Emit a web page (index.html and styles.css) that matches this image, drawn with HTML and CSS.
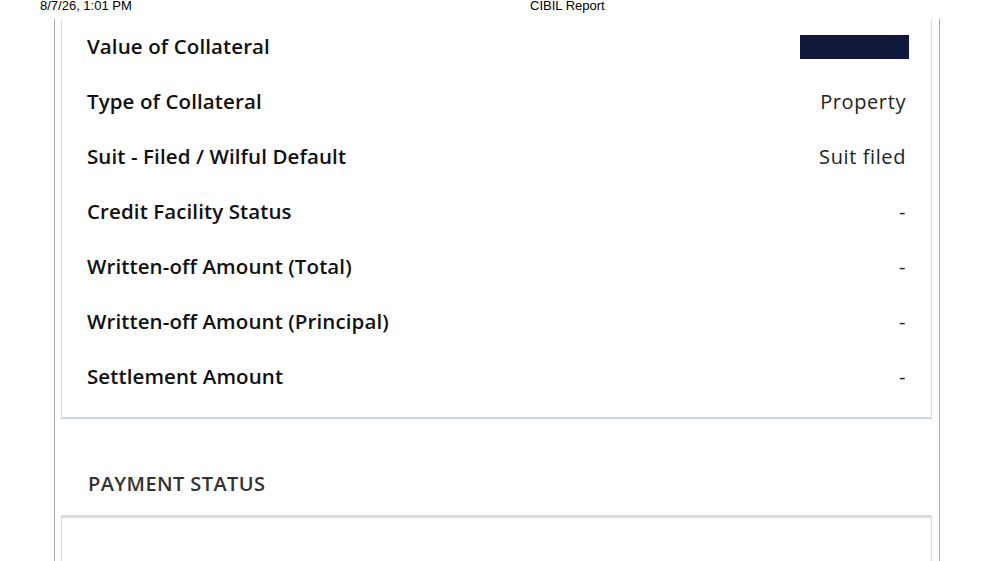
FILE: index.html
```html
<!DOCTYPE html>
<html>
<head>
<meta charset="utf-8">
<link rel="stylesheet" href="styles.css">
<title>CIBIL Report</title>
</head>
<body>
<header class="print-head">
  <span class="ph-date">8/7/26, 1:01 PM</span>
  <span class="ph-title">CIBIL Report</span>
</header>
<main class="frame">
  <section class="card">
    <div class="row"><span class="label">Value of Collateral</span><span class="value"><span class="masked"></span></span></div>
    <div class="row"><span class="label">Type of Collateral</span><span class="value">Property</span></div>
    <div class="row"><span class="label">Suit - Filed / Wilful Default</span><span class="value">Suit filed</span></div>
    <div class="row"><span class="label">Credit Facility Status</span><span class="value">-</span></div>
    <div class="row"><span class="label">Written-off Amount (Total)</span><span class="value">-</span></div>
    <div class="row"><span class="label">Written-off Amount (Principal)</span><span class="value">-</span></div>
    <div class="row"><span class="label">Settlement Amount</span><span class="value">-</span></div>
  </section>
  <h2 class="section-title">PAYMENT STATUS</h2>
  <section class="card card-open"></section>
</main>
</body>
</html>
```

FILE: styles.css
```css
html, body {
  margin: 0;
  padding: 0;
  background: #fff;
  height: 100%;
  overflow: hidden;
}
body {
  font-family: "Open Sans", "Liberation Sans", sans-serif;
  color: #111;
}
.print-head {
  height: 19px;
  position: relative;
  font-family: "Liberation Sans", Arial, sans-serif;
  font-size: 13px;
  line-height: 13px;
  color: #000;
}
.ph-date {
  position: absolute;
  left: 40px;
  top: -1px;
}
.ph-title {
  position: absolute;
  left: 530px;
  top: -1px;
}
.frame {
  box-sizing: border-box;
  margin-left: 54px;
  width: 886px;
  border-left: 1px solid #a8a8a8;
  border-right: 1px solid #a8a8a8;
  padding: 0 7px 0 6px;
  height: 542px;
}
.card {
  border-left: 1px solid #dcdcdc;
  border-right: 1px solid #dcdcdc;
  border-bottom: 1px solid #d8d8d8;
  box-shadow: 0 1px 0 #c6d3ea;
  padding: 0 25px 13px 25px;
}
.row {
  height: 55px;
  display: flex;
  align-items: center;
  justify-content: space-between;
}
.label {
  font-size: 20.5px;
  font-weight: 600;
  color: #111;
  letter-spacing: 0.1px;
  margin-top: -2px;
}
.value {
  font-size: 20px;
  font-weight: 400;
  color: #222;
  letter-spacing: 0.6px;
}
.masked {
  display: block;
  width: 109px;
  height: 24px;
  background: #111a3a;
  margin-right: -3px;
}
.section-title {
  margin: 0;
  padding: 53px 0 0 27px;
  height: 44px;
  font-size: 20px;
  font-weight: 600;
  color: #333;
  line-height: 26px;
  letter-spacing: 0.4px;
}
.card-open {
  border-top: 3px solid #dcdcdc;
  border-bottom: none;
  box-shadow: none;
  height: 60px;
}
```
